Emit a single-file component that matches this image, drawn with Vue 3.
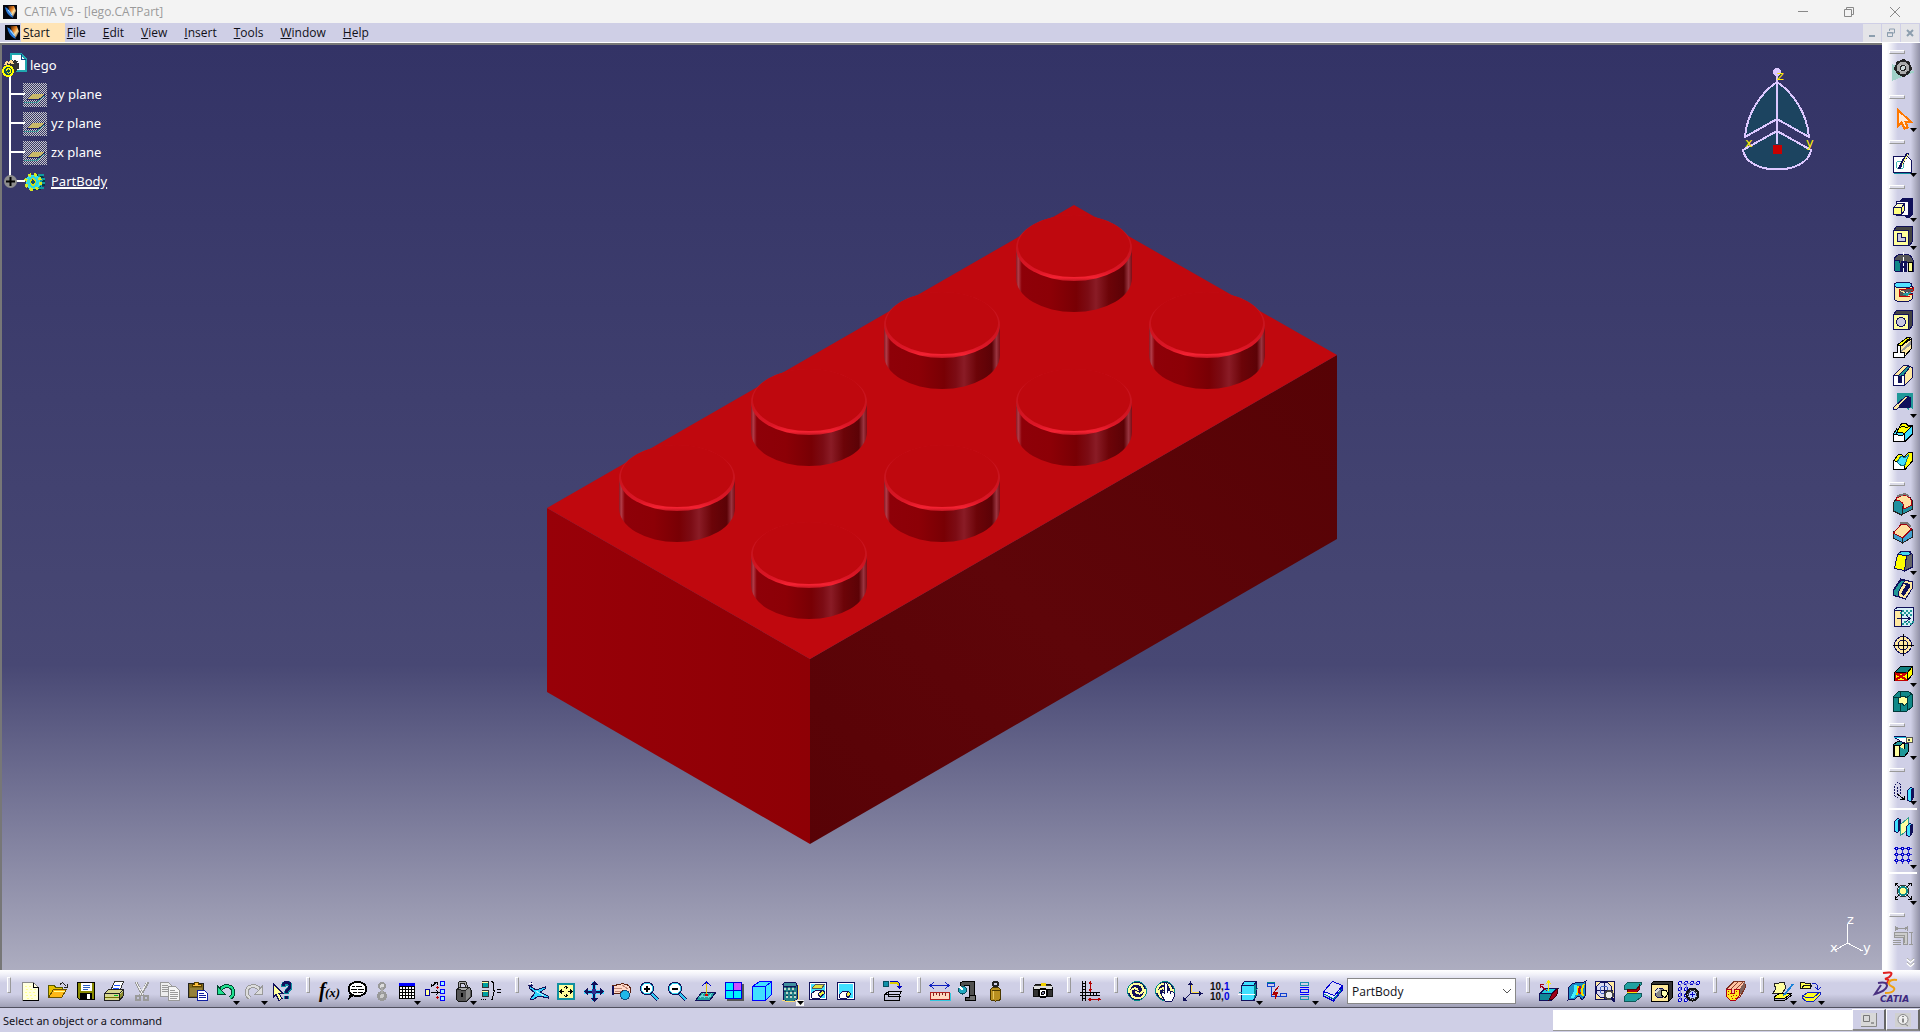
<script setup>
import { ref } from 'vue'

const p = (d, f = 'none', s = 'none', w = 1) => `<path d="${d}" fill="${f}" stroke="${s}" stroke-width="${w}"/>`
const r = (x, y, w, h, f = 'none', s = 'none') => `<rect x="${x}" y="${y}" width="${w}" height="${h}" fill="${f}" stroke="${s}"/>`
const c = (x, y, q, f = 'none', s = 'none', w = 1) => `<circle cx="${x}" cy="${y}" r="${q}" fill="${f}" stroke="${s}" stroke-width="${w}"/>`
const e = (x, y, a, b, f = 'none', s = 'none', w = 1) => `<ellipse cx="${x}" cy="${y}" rx="${a}" ry="${b}" fill="${f}" stroke="${s}" stroke-width="${w}"/>`
const t = (x, y, size, txt, f = '#000', extra = '') => `<text x="${x}" y="${y}" font-size="${size}" fill="${f}" ${extra}>${txt}</text>`

const N = '#10105a'
const Y = '#ffff9c'
const T = '#008888'
const C = '#40e0ff'
const G = '#8a8a8a'

const magnifier = (sign) =>
  p('M15 16l7 7', 'none', N, 4) + p('M15 16l7 7', 'none', '#30c8f0', 2) + c(11, 11.5, 6.5, '#fff', N, 1) + c(11, 11.5, 5.5, 'none', '#30d8f0', 1) + p(sign, 'none', '#000', 2)
const swirl =
  c(14, 14, 9.5, N, T, 1) +
  p('M6 16c-1-6 3-9 7-9c4 0 7 2 7 6c0 4-6 5-7 1', 'none', Y, 2) +
  p('M22 12c1 6-3 9-7 9c-4 0-7-2-7-6c0-4 6-5 7-1', 'none', Y, 2)
const plate = p('M4.5 8.5l3-4h16v15l-3 4z', '#444', N) + p('M4.5 8.5h15v15h-15z', Y, N)
const dots = (xs, ys) => xs.map((x) => ys.map((y) => c(x, y, 1.5, '#dfe0ff', '#0000c8')).join('')).join('')

const icons = {
  new: p('M6.5 5.5h11l5 5v13h-16z', '#ffffe0', G) + p('M9 9h2m2 0h2m-5 3h2m2 0h2m2 0h2m-11 3h2m2 0h2m2 0h2m-9 3h2m2 0h2m2 0h2m-9 3h2m2 0h2', 'none', '#ffff90') + p('M17.5 5.5v5h5v13h-16', 'none', '#000'),
  open: p('M4.5 20v-12h5l2 2h7v5', '#e8c000', '#5a5a00') + p('M4.5 20.5l5-8h13l-5 8z', '#ffb818', '#6a5200') + p('M10 14h11', 'none', '#ffff90') + p('M15.5 8.5c2-4 5-3 6 1M23.5 7v3h-4', 'none', '#222'),
  save: p('M5.5 5.5h17v17h-15l-2-2z', '#8a8a00', '#000') + r(9, 6, 11, 8, '#fff') + p('M11 8.5h7M11 10.5h7M11 12.5h5', 'none', '#2a60c0') + r(8, 16, 12, 7, '#000') + r(15, 17, 3, 5, '#fff'),
  print: p('M10.5 14l4-9.5h9l-4 10z', '#fff', '#333') + p('M14 8.5h6M13 11.5h6', 'none', '#1850ff') + p('M4.5 16.5l4-4h15v6l-4 5h-15z', '#d8d890', '#222') + p('M5 16.5h14.5v7M19.5 16.5l4-4', 'none', '#222') + p('M5 20.5h14', 'none', '#707000') + r(14, 18, 4, 1, '#00c020') + p('M20 18l3-4v4l-3 4z', '#8c8c30'),
  cut: p('M8 5l7 14M20 5l-8 14', 'none', '#999', 3) + p('M8 5l7 13M19 5l-7 13', 'none', '#eee') + c(10, 21, 2.5, 'none', '#999', 2) + c(18, 21, 2.5, 'none', '#999', 2),
  copy: p('M4.5 5.5h8l4 4v10h-12z', '#eee', '#999') + p('M6 8.5h6M6 10.5h7M6 12.5h7M6 14.5h7', 'none', '#999') + p('M12.5 9.5h7l4 4v10h-11z', '#f5f5f5', '#999') + p('M14 13.5h5M14 15.5h8M14 17.5h8M14 19.5h8M14 21.5h7', 'none', '#999'),
  paste: r(4.5, 6.5, 15, 14, '#806a20', '#222') + p('M8 7.5h2l1-2.5h3l1 2.5h2v2h-9z', '#ffc040', '#5a4000') + r(6, 11, 12, 8, '#94803a') + p('M13.5 13.5h7l3 3v7h-10z', '#fff', '#1020a0') + p('M15 16.5h5M15 18.5h7M15 20.5h7', 'none', '#1020a0'),
  undo: p('M8 13c4-6 14-5 13 3c0 2-1 4-3 5', 'none', '#004830', 4) + p('M8 13c4-6 14-5 13 3c0 2-1 4-3 5', 'none', '#20e090', 2) + p('M5.5 9v8.5h8z', '#20e090', '#004830'),
  redo: p('M20 13c-4-6-14-5-13 3c0 2 1 4 3 5', 'none', '#999', 4) + p('M20 13c-4-6-14-5-13 3c0 2 1 4 3 5', 'none', '#ddd', 2) + p('M22.5 9v8.5h-8z', '#ddd', '#999'),
  help: p('M15 10c0-5 8-5 7 0c0 3-4 3-4 7M18 19v3', 'none', '#1090a0', 5) + p('M15 9c0-5 8-5 7 0c0 3-4 3-4 7M18 19v3', 'none', N, 3) + p('M5 6.5v14l3-3l3 6l3-2l-3-5h4z', Y, N),

  fx: t(4, 20, 20, 'f', '#000', 'font-style="italic" font-weight="bold" font-family="Liberation Serif"') + t(10, 20, 13, '(x)', '#000', 'font-style="italic" font-weight="bold" font-family="Liberation Serif"'),
  comment: e(14.5, 12, 9, 7, '#fff', '#000', 2) + p('M7 16l-2 7l7-5z', '#000') + p('M9 9.5h3m1 0h6M8 12.5h6m1 0h6M10 15.5h4m1 0h5', 'none', '#000'),
  link: c(11, 9, 3, '#ddd', '#999', 2) + c(11, 19, 3.5, '#ccc', '#999', 3) + r(10, 10, 2, 6, '#aaa'),
  table: r(6, 6, 16, 3, '#0000ff') + r(6.5, 9.5, 15, 12, '#fff', '#000') + p('M6 12.5h16M6 15.5h16M6 18.5h16M9.5 9v13M12.5 9v13M15.5 9v13M18.5 9v13', 'none', '#000'),
  tree: r(4.5, 12.5, 4, 6, Y, '#0000a0') + p('M10 10l6-5M16 8v-3h-3M10 10v-3M10 15.5h7M15 13.5l3 2l-3 2', 'none', '#000') + p('M15 10.5h3M16.5 9v3M15 20.5h3M16.5 19v3', 'none', '#c00000') + r(19.5, 4.5, 4, 4, '#a0f0ff', '#0000ff') + r(19.5, 12.5, 4, 4, '#a0f0ff', '#0000ff') + r(19.5, 19.5, 4, 4, '#a0f0ff', '#0000ff'),
  lock: p('M10 13v-5c0-4 7-4 7 0v5', 'none', '#222', 3) + p('M10 13v-5c0-4 7-4 7 0v5', 'none', '#aaa', 1) + p('M7 13l4-3h9l2 3v7l-4 4h-9l-2-2z', '#555', '#111') + p('M7.5 12.5l3-2h9l-3 3z', '#aaa', '#222') + p('M17 13l4-2v9l-4 3z', '#888') + r(12, 16, 2, 4, '#000'),
  braces: r(5, 4, 6, 6, '#00a0a0', '#333') + r(5, 5, 6, 1, Y) + r(5, 13, 6, 6, '#00a0a0', '#333') + r(5, 14, 6, 1, Y) + p('M4 22.5h1m1 0h1m1 0h1', 'none', '#000') + p('M14 4.5c3 0 2 2 2 5c0 3 0 4 2 4.5c-2 .5-2 2-2 5c0 3 0 4-2 4', 'none', '#000') + p('M20 12.5h4M20 15.5h4', 'none', '#000'),

  fly: p('M6 9l6 4l9-3v2l-5 3l8 4v2l-9-2l-7 4l-2-1l5-6l-6-5z', '#30d8ff', N) + p('M4 9l5-1M7 5l1 5', 'none', N) + p('M5 6l4 1', 'none', '#fff', 1) + p('M12 14l8 5', 'none', '#b0f4ff'),
  fit: r(5, 6, 18, 17, Y) + r(6, 7, 16, 15, Y) + p('M6 6v17M5 7h18M22 6v17M5 22h18', 'none', '#1090a0', 2) + p('M14 9v3M14 17v3M8 14.5h4M16 14.5h4M12 11l2-2l2 2M12 18l2 2l2-2M10 12.5l-2 2l2 2M18 12.5l2 2l-2 2', 'none', '#000'),
  pan: p('M14 5v19M4 14.5h20', 'none', '#40d8ff', 4) + p('M14 6v17M5 14.5h18', 'none', N, 2) + p('M14 4l-4 4h8zM14 25l-4-4h8zM4 14.5l4-4v8zM24 14.5l-4-4v8z', N) + r(12, 12, 4, 5, '#303090'),
  rotate: p('M4 9c4 0 7-3 12-2c4 0 7 3 7 7l-2 4l-6-5l-4 4c-2 0-3-1-7-1z', '#ffd8c8', '#5a2010') + p('M5 11h9M7 14h8M14 8l6 4', 'none', '#c08878') + c(17, 18, 4.5, '#20b8e8', '#105080') + p('M4.5 9v9', 'none', N, 2),
  zoomIn: magnifier('M8 11.5h6M11 8.5v6'),
  zoomOut: magnifier('M8 11.5h6'),
  normal: p('M4 23l6-8h14l-6 8z', '#20a0a0', N) + p('M8 21l4-5M12 21l4-5M16 21l4-5M7 19h12', 'none', '#70d8d8') + p('M14.5 18v-12', 'none', '#e0c000') + p('M10 9l4.5-4l4.5 4', 'none', '#0000c0') + r(13, 17, 3, 2, '#d00000'),
  multi: r(7, 7, 17, 17, '#555') + r(5.5, 5.5, 16, 16, '#00f0ff', '#0000e0') + r(14, 6, 7, 7, '#d050ff') + p('M13.5 5v17M5 13.5h17', 'none', '#0000e0'),
  iso: p('M4.5 9.5l7-5h12v13l-6 6h-13z', C, '#0000ff') + p('M4.5 9.5h13v14M17.5 9.5l6-5', 'none', '#0000ff'),
  shade: p('M7 8v14c0 3 14 3 14 0v-14', '#208088', N) + p('M8 12h2m2 0h2m2 0h2m-8 4h2m2 0h2m2 0h2m-10 4h2m2 0h2m2 0h2', 'none', '#c0d8c8', 2) + p('M10 10h2m2 0h2m2 0h2m-12 4h2m2 0h2m2 0h2m-8 4h2m2 0h2m2 0h2', 'none', '#183858', 1) + e(14, 7.5, 7, 2.5, '#4090a0', N) + p('M6 23c3 2 12 2 16 0v-15', 'none', '#ffe070'),
  hide: r(5.5, 5.5, 17, 17, C, N) + r(6.5, 6.5, 15, 15, 'none', '#fff') + p('M8 11l4-4h9l-4 5z', '#e0e040', '#555') + p('M7 17l5-4h7l2 3l-5 5h-8z', '#fff', N) + p('M14 17l5-4l2 3l-5 4z', '#f0f040', N),
  swap: r(5.5, 5.5, 17, 17, C, N) + r(6.5, 6.5, 15, 15, 'none', '#fff') + p('M7 18l4-4h5l3 3l-4 4h-7z', '#fff', N) + p('M14 18l2-4l3 3l-3 4z', '#f0f040', N),

  update3d: c(7, 7, 3, '#1090a8', '#085060') + p('M11 5.5h6c2 0 3 2 3 5', 'none', '#e0d000', 2) + p('M11 4.5h6c2 0 4 2 4 5', 'none', '#0000c0') + p('M17 9h7l-3.5 3z', '#0000c0') + p('M5.5 17.5l4-3h13l-2 3v6h-15zM5.5 17.5h15M9.5 14.5v5h12', 'none', '#000'),

  measureBetween: p('M5 8.5h17M8 5l-4 3.5l4 3.5M19 5l4 3.5l-4 3.5', 'none', '#1020c0') + r(4.5, 15.5, 19, 7, '#ffd8c0', '#b02020') + p('M7.5 16v3M10.5 16v2M13.5 16v3M16.5 16v2M19.5 16v3', 'none', '#802020') + p('M4 23.5h20v-8', 'none', '#30c8e0'),
  measureItem: p('M6 6l4-2h10v19h-9v-3h4v-12h-5v3h-4z', '#505050', '#000') + c(8.5, 13, 4, '#20a8c0', '#085060') + p('M6 10l3 3', 'none', '#fff', 2) + p('M16 18h5v5h-5', '#707070', '#000'),
  inertia: c(13.5, 7, 2.5, 'none', '#222', 2) + p('M8.5 12.5c2-3 8-3 10 0v10c-2 2-8 2-10 0z', '#b89020', '#4a3800') + p('M11 13v9', 'none', '#e8c860') + p('M10 13h8', 'none', '#4a3800'),

  camera: p('M4.5 10.5l2-3h15l2 3v9h-19z', '#333', '#111') + r(5, 9, 18, 3, '#ddd') + r(12, 6, 5, 3, '#f0d000') + p('M4.5 12.5h19', 'none', '#000') + c(14, 16, 4.5, '#fff', '#000', 2) + c(14, 16, 1.5, '#8080a0', '#000'),

  rulers: p('M6.5 4v20M9.5 4v20M4 15.5h20M4 18.5h20', 'none', '#000') + p('M7 6.5h3M7 9.5h3M7 12.5h3M7 21.5h3M14.5 15v4M17.5 15v4M20.5 15v4', 'none', '#000') + p('M14.5 6v8M13 7l1.5-2l1.5 2M13 12l1.5 2l1.5-2M14 22.5h9M15 21l-2 1.5l2 1.5M22 21l2 1.5l-2 1.5', 'none', '#b00000'),

  update: swirl,
  manual: swirl + p('M13 7c0-2 3-2 3 0v6l6 2c2 1 2 3 1 5l-2 4h-7l-4-7c0-2 2-2 3-1z', '#fff', N) + p('M16.5 13v3M19.5 14v3', 'none', N),
  axis: p('M11.5 16v-11M11.5 16.5h12M11.5 16.5l-6 6', 'none', N) + p('M9 8l2.5-4l2.5 4zM20 14l4 2.5l-4 2.5zM4 20v4h4z', N) + p('M12.5 15v-7M13 15.5h7', 'none', '#ffe040'),
  mean: t(3, 13, 10, '10,', '#101010', 'font-weight="bold"') + t(17, 13, 10, '1', '#0000e0', 'font-weight="bold"') + t(3, 23, 10, '10,', '#101010', 'font-weight="bold"') + t(17, 23, 10, '0', '#0000e0', 'font-weight="bold"'),
  bodyOnly: p('M6.5 8.5l3-4h12v14l-3 5h-12z', C, N) + p('M7 8.5h12v15M18.5 8.5l3-4', 'none', N) + p('M19 9l2-3v12l-2 4z', T) + p('M3 17.5h17', 'none', '#fff') + p('M4 15.5h3M20 14l3-3', 'none', '#1890a0'),
  onlyCurrent: r(4.5, 6.5, 7, 3, 'none', '#1040d0') + p('M8.5 10v9h9', 'none', '#1040d0') + r(17.5, 16.5, 6, 3, 'none', '#1040d0') + p('M16 9l-5 6h4l-3 7l1-5h-3z', '#b00000', '#b00000') + p('M4 5.5h8', 'none', T),
  catalogTree: r(9.5, 5.5, 8, 3, 'none', '#1890b0') + r(9.5, 12.5, 8, 3, 'none', '#0000ff') + r(9.5, 19.5, 8, 3, 'none', '#1890b0') + p('M9 10.5h9M9 17.5h9', 'none', '#0000ff'),
  layers: p('M4.5 16.5l9-11l10 5l-9 12z', '#e8e8ff', '#0000d0') + p('M4.5 14.5l9-10l10 4l-8 10z', '#dcdcf4', '#0000d0') + p('M5 17l10 5l8-10', 'none', '#008888') + p('M4.5 15v4l10 5l9-11v-4', 'none', '#0000d0'),

  draft: p('M4.5 17l5-6h14l-6 7l-1 5h-12z', '#108898', N) + p('M5 16.5l5-5h12l-5 5z', '#20d0e0', N) + p('M14 23l3-6l6-6c1 5-3 12-9 12z', '#a00018', '#400008') + p('M13.5 14v-9M11 7l2.5-3l2.5 3', 'none', '#ffe800', 1) + p('M12 14l-7-6M5 11v-4h4', 'none', '#a00010'),
  curvature: p('M9 7c5-3 8 1 14-3c-1 6-1 10 0 14l-4 5c-2-4-4-5-7-1l-7 1c2-5 1-8 0-12z', '#1890c8', N) + p('M12 8c2 4 0 9-3 13', 'none', '#40f0ff', 3) + p('M15 9c1 3 0 6-1 9M21 7c-2 4-3 8-1 12', 'none', '#f0e000', 2) + p('M17 9c-1 3-1 6 0 8', 'none', '#d00000', 2),
  tap: r(4.5, 4.5, 19, 18, '#ffe8a0', N) + c(13, 13, 8, '#d8d8f0', N) + p('M13 4v18M4 13.5h18', 'none', N) + c(13, 13, 4, 'none', '#4060c0') + c(18, 18, 4, '#eee', '#444', 2) + p('M20 21l4 3', 'none', N, 3),
  wall: p('M5 9l4-4h13v3l-5 4h-12z', '#20a0a0', '#105858') + p('M8 12h10l2-3v4l-3 3h-9z', '#b00010', '#500') + r(8, 15, 10, 2, '#ffe000') + p('M5 20l4-4h13v4l-5 4h-12z', '#20a0a0', '#105858'),
  section: p('M4 7l3-3h18v17l-4 4z', '#333', '#000') + r(4.5, 7.5, 17, 17, '#ffe898', '#000') + c(13, 16, 5, '#888', N) + p('M15 13h4l2 4l-3 4l-4-3z', '#ffffb0', '#000') + p('M8 16l4-4', 'none', '#ddd', 2),
  gridGear: dots([5, 11, 17, 23], [6]) + dots([5, 11], [12, 18, 23]) + p('M6 6.5h17M5.5 7v16M11.5 7v16', 'none', '#8080e0') + c(17.5, 17.5, 6, '#c8c8d0', '#111', 2) + c(17.5, 17.5, 4, '#b8c8ff', '#303040') + p('M15 17.5h5M17.5 15v5', 'none', '#0000c0'),

  mold: p('M4.5 12l8-8h10l1 6l-6 11', '#ffc0a0', '#7a3020') + p('M9 12l8-8M14 12l8-8', 'none', '#8a4030') + p('M17.5 12l5-7v6l-5 8z', '#806058') + p('M4.5 12.5h5v4h3v-4h5v6l-4 5h-5l-4-4z', '#ffe820', '#b00010') + p('M6 14h1m1 2h1m-3 1h1m2 2h1m1-1h1m-2 3h1m3-3h1m-1-4h1m-2 7h1', 'none', '#d00000'),
  sketchOut: p('M5 7l10-2l2 6l-4 5h-9l3-4z', '#ffffa0', '#222') + p('M5 20l6-4h12l-7 5h-10z', '#ffff30', '#000') + p('M5 20v3h11l7-5', 'none', '#000') + p('M24 7l-8 10l-2 1', 'none', '#1880d8', 2),
  exchange: p('M3.5 11.5v-6h4l1 1h5v5z', '#ffff50', '#111') + p('M5 11l2-3h8l-2 3z', '#ffff50', '#111') + p('M15 6.5c4-1 6 1 6 6M18 10l3 3l3-3', 'none', '#1020c0') + p('M5 19v2l4 3h8l6-6v-3', '#ffff20', '#1020c0') + p('M5 19l7-4h11l-6 5h-9z', '#ffff20', '#1020c0'),

  gear: p('M3 5l23 8l-23 9z', '#a0d0c8') + c(14, 9, 7, 'none', '#222', 2) + c(14, 9, 5, '#d8d8d8', '#aaa', 3) + p('M14 0v3M14 15v3M5 9h3M20 9h3M8 3l2 2M18 13l2 2M8 15l2-2M18 5l2-2', 'none', '#222', 3) + c(14, 9, 2.5, '#ccd8d8', '#222', 1),
  pointer: p('M8.5 5.5v17l4-4l3 6l3-1l-2-6h5z', '#ffe8d8', '#ff7800', 2),
  sketch: p('M4.5 7.5h14l4 4v12h-18z', '#fff', N) + c(11, 16, 4, 'none', '#40b8b0', 1) + p('M19 4l-7 12l-2 4', 'none', N, 3) + p('M19 5l-6 11', 'none', '#ffff80', 1) + p('M5 24.5h18', 'none', '#1090a0'),

  pad: p('M10 7l4-3h10v16l-4 4h-3z', N) + r(7.5, 7.5, 12, 14, '#fff', N) + p('M4.5 13.5l4-4h7l-3 4z', '#ffffc0', N) + p('M4.5 13.5h8v7h-8zM12.5 13.5l3-4v7l-3 4z', '#ffff80', N),
  pocket: plate + p('M8.5 11.5h4v4h4v4h-8z', '#c8c8e0', N),
  shaft: p('M5 10c2-8 17-8 19 0v11h-5v-9h-4v9h-9z', '#555', N) + p('M5 10h5l1 3v8h-5z', '#108888', N) + p('M19 12h4v9h-4z', '#ffff90', '#000') + r(12, 11, 6, 11, N) + p('M14.5 2v3m0 2v4m0 2v3m0 2v4', 'none', '#fff'),
  groove: p('M5 8v13c3 4 15 4 18 0v-6h-7v-4h7v-3', '#ffe8a0', N) + e(14, 7, 9, 3, '#50e0ff', N) + p('M10 12l14-2v3l-5 3h5M10 12v6l11 1', '#555', '#c00000', 1) + p('M13 16l9-2l-4 4z', '#20a0a0'),
  hole: plate + c(12, 16, 4.5, '#c8c8e0', N, 1),
  rib: p('M11.5 18.5v-6l11-8v10l-7 8z', '#ffe8a0', '#000') + p('M12 16l10-9v4l-10 7', '#999') + p('M8 11l11-8h3l-10 9h-4z', '#ffff00', '#000') + p('M4.5 18.5h4v-7h3v7h4v5h-11z', '#fff', '#000'),
  slot: p('M4.5 13.5l10-10h4l5 2v10l-8 8h-11z', '#ffe8a0', N) + p('M9 14l10-10l2 1l-7 9v6h-4z', '#209898', N) + p('M4.5 13.5h5v7h3v-7h3v10h-11z', '#fff', N) + p('M10 14h2v6h-2z', N),
  stiffener: p('M8 3h16v16l-4-2v4l-5-6h-7z', '#209898') + p('M9 18l10-11h2v10z', N, N) + p('M4.5 17.5l12-11h3l-12 13h-3z', '#ffe8a0', N),
  multiSec: p('M4.5 16l3-5l4 1l8-5h4v9l-7 7h-12z', '#40e0ff', '#000') + p('M4.5 16.5c4-1 6 3 11 0v7h-11z', '#fff', '#000') + p('M7 16c3-5 3-9 7-11c5 0 5 3 6 4l3-1l-7 7c-2 2-5-4-9 1z', '#ffff00', '#000') + p('M11 10c3-4 6 2 10-2', 'none', '#000'),
  removeSec: p('M4.5 15l5-7h3l2 3l6-5h3v9l-7 8h-12z', '#ffff00', '#000') + p('M4.5 14.5c4 1 6 5 11 1v8h-11z', '#fff', '#000') + p('M8 16l4-6c4 3 6 0 8-2l-3 8c-1 6-6 4-9 0z', '#40e0ff', '#107080'),

  fillet: p('M4.5 12v8l8 4l11-6v-6c0-5-3-6-7-7l-9 2z', '#2090a0', '#222') + p('M7 7l8-3c6 1 8 4 8 10l-8 4c0-6-2-8-8-9z', '#ffe0a0', '#b00010') + p('M8 5l8-2l4 2', 'none', '#777', 2) + p('M13 15v9', 'none', '#222'),
  chamfer: p('M4.5 13v6l9 5l10-6v-7l-10 4z', '#40a0d0', '#222') + p('M4.5 14l8-9h4l6 5l-9 9z', '#ffe0a0', '#a00010') + p('M11 4h7l4 4', 'none', '#777', 2) + p('M13.5 19v5', 'none', '#222'),
  draftAngle: p('M17.5 9l4-4l2 3v12l-8 4z', '#666', N) + p('M9 7l4-3h7l2 3l-4 2h-9z', '#40d8f0', N) + p('M8.5 7.5l9 1l-2 15l-10-2z', '#ffff00', N),
  shell: p('M4.5 15l7-11l12 3v6l-7 11l-12-4z', '#ffe8a0', N) + p('M5 15l7-10h4l-6 11l-1 6l-5-2z', '#209898', N) + p('M13 7l8 2v3l-6 9l-3-2l5-9z', N),
  thickness: p('M5 7l4-3h15v16l-3 3h-16z', '#d8f0f8', N) + r(5, 7, 7, 16, '#ffe8a0', N) + p('M13 8h2m2 0h2m2 0h2m-12 2h2m2 0h2m2 0h2m-8 2h2m2 0h2m2 0h2m-8 7h2m2 0h2m2 0h2m-12 2h2m2 0h2m2 0h2', 'none', '#209898', 2) + p('M8 15.5h13M17 12l4 3.5l-4 3.5', 'none', N, 1),
  thread: c(14, 14, 8.5, '#ffe8a0', N) + c(14, 14, 5, 'none', N) + p('M14.5 3v22M4 14.5h21', 'none', '#000'),
  removeFace: p('M5.5 13.5l6-6h12v8l-5 6h-13z', '#ffff00', '#000') + p('M5.5 13.5l6-6h12l-5 6z', '#108080', '#000') + p('M6 14h12v7h-12z', '#ffff00', '#c00000') + p('M6 14l12 7M18 14l-12 7', 'none', '#d00000', 2) + p('M18.5 14v7', 'none', '#000'),
  replaceFace: p('M4.5 9.5l5-5h10l4 3v12l-6 5h-13z', '#108888', '#003838') + p('M5 10h13v14M18 10l5-3M11.5 4v20', 'none', '#003838') + p('M9 11l5-2l5 2l-1 5l-3 3l-2-3h-4z', '#ffffa0', '#003838'),

  split: p('M4.5 12.5l4-3h11v10l-4 5h-11z', '#209898', '#000') + p('M5 13h5v11h-5z', '#ffffa0', '#000') + p('M5 5l10-1l9 6l-8 2z', '#fff', N) + p('M5 5h10l9 5', 'none', '#20c0e0') + r(17.5, 5.5, 6, 5, '#ffffa0', '#555') + r(19, 7, 2, 2, '#444') + p('M10 14l5-3v6', '#ffffa0', '#000'),
  translate: `<g stroke-dasharray="2 1">${p('M5.5 8.5l3-3l3 2v10l-3 3l-3-2zM8.5 10v9', 'none', N)}</g>` + p('M8 17l7 5M11 22h4v-3', 'none', '#000') + p('M18.5 13.5l3-3l3 1v9l-3 4l-3-1z', '#40e0ff', N) + p('M22 12l2-1v9l-2 4z', N),
  mirror: p('M5.5 8.5l3-3l3 1v9l-3 4l-3-1z', '#40e0ff', N) + p('M9 7l2-1v9l-2 4z', N) + p('M11 12l8-7v12l-8 6z', '#ffffa0', '#30a090') + p('M17.5 13.5l3-3l3 1v8l-3 4l-3-1z', '#40e0ff', N) + p('M21 12l2-1v8l-2 4z', N),
  pattern: p('M7.5 6v17M13.5 6v17M19.5 6v17M5 7.5h18M5 13.5h18M5 19.5h18', 'none', '#3030d0') + dots([7.5, 13.5, 19.5], [7.5, 13.5, 19.5]),
  scale: c(14, 14, 6, '#fff', '#333') + c(14, 14, 4, '#ffff90', '#108888', 2) + p('M10 10l-4-4M18 10l4-4M10 18l-4 4M18 18l4 4M6 9v-3h3M22 9v-3h-3M6 19v3h3M22 19v3h-3', 'none', '#000'),
  constraint: p('M6.5 4v5M18.5 4v5M7 6.5h11M9 5l-2 1.5l2 1.5M16 5l2 1.5l-2 1.5M20 10.5h4M20 22.5h4M22.5 11v11', 'none', '#999') + p('M5 10.5h13v12h-4v-7h-9z', '#ccc', '#999') + p('M4 18.5h8M4 20.5h8M4 22.5h8M5 13h10v8', 'none', '#999'),
}

const b = (icon, label, menu = false) => ({ icon, label, menu })

const bottomGroups = [
  [b('new', 'New'), b('open', 'Open'), b('save', 'Save'), b('print', 'Quick Print'), b('cut', 'Cut'), b('copy', 'Copy'), b('paste', 'Paste'), b('undo', 'Undo', true), b('redo', 'Redo', true), b('help', "What's This?")],
  [b('fx', 'Formula'), b('comment', 'Comment and URLs'), { ...b('link', 'Check'), narrow: true }, b('table', 'Design Table', true), b('tree', 'Knowledge Inspector'), b('lock', 'Lock Parameters', true), b('braces', 'Equivalent Dimensions')],
  [b('fly', 'Fly Mode'), b('fit', 'Fit All In'), b('pan', 'Pan'), b('rotate', 'Rotate'), b('zoomIn', 'Zoom In'), b('zoomOut', 'Zoom Out'), b('normal', 'Normal View'), b('multi', 'Create Multi-View'), b('iso', 'Isometric View', true), { ...b('shade', 'Shading with Edges', true), lit: true }, b('hide', 'Hide/Show'), b('swap', 'Swap Visible Space')],
  [b('update3d', 'Exchange')],
  [b('measureBetween', 'Measure Between'), b('measureItem', 'Measure Item'), b('inertia', 'Measure Inertia')],
  [b('camera', 'Capture')],
  [b('rulers', 'Mean Dimensions')],
  [b('update', 'Update All'), b('manual', 'Manual Update'), b('axis', 'Axis System'), b('mean', 'Tolerances'), b('bodyOnly', 'Create Datum', true), b('onlyCurrent', 'Only Current Body'), b('catalogTree', 'Insert in Tree', true), b('layers', 'Current Body')],
  [b('draft', 'Draft Analysis'), b('curvature', 'Curvature Analysis'), b('tap', 'Tap and Thread Analysis'), b('wall', 'Wall Thickness'), b('section', 'Dynamic Sectioning'), b('gridGear', 'Work on Support')],
  [b('mold', 'Functional Features')],
  [b('sketchOut', 'Sketch Output', true), b('exchange', 'Catalog Exchange', true)],
]

const sideGroups = [
  [[b('gear', 'Part Design')]],
  [[b('pointer', 'Select', true)]],
  [[b('sketch', 'Sketch', true)]],
  [[b('pad', 'Pad', true), b('pocket', 'Pocket', true), b('shaft', 'Shaft'), b('groove', 'Groove'), b('hole', 'Hole'), b('rib', 'Rib'), b('slot', 'Slot'), b('stiffener', 'Stiffener', true), b('multiSec', 'Multi-sections Solid'), b('removeSec', 'Removed Multi-sections Solid')]],
  [[b('fillet', 'Edge Fillet', true), b('chamfer', 'Chamfer'), b('draftAngle', 'Draft Angle', true), b('shell', 'Shell'), b('thickness', 'Thickness'), b('thread', 'Thread/Tap'), b('removeFace', 'Remove Face', true), b('replaceFace', 'Replace Face')]],
  [[b('split', 'Split', true)]],
  [[b('translate', 'Translation', true)], [b('mirror', 'Mirror'), b('pattern', 'Rectangular Pattern', true)], [b('scale', 'Scaling', true)]],
  [[b('constraint', 'Constraints')]],
]

const menus = ['Start', 'File', 'Edit', 'View', 'Insert', 'Tools', 'Window', 'Help']
const planes = ['xy plane', 'yz plane', 'zx plane']
const studs = [[527, 45], [395, 122], [660, 122], [262, 199], [527, 199], [130, 275], [395, 275], [262, 352]]
const body = ref('PartBody')
const command = ref('')
</script>

<template>
  <div class="app">
    <header class="titlebar">
      <svg class="app-icon" width="14" height="14" viewBox="0 0 14 14"><use href="#comet" /></svg>
      <h1>CATIA V5 - [lego.CATPart]</h1>
      <div class="window-buttons">
        <button aria-label="Minimize"><svg width="12" height="12"><path d="M1 5.5h10" /></svg></button>
        <button aria-label="Restore"><svg width="12" height="12"><path d="M1.5 3.5h7v7h-7zM3.5 3v-1.5h7v7h-2" /></svg></button>
        <button aria-label="Close"><svg width="12" height="12"><path d="M1 1l10 10M11 1l-10 10" /></svg></button>
      </div>
    </header>

    <nav class="menubar">
      <svg class="doc-icon" width="15" height="15" viewBox="0 0 14 14">
        <defs>
          <linearGradient id="flame" x1="0" y1="0" x2="1" y2="1">
            <stop offset="0" stop-color="#301000" /><stop offset=".4" stop-color="#e88020" /><stop offset=".6" stop-color="#ffe0a0" /><stop offset="1" stop-color="#401808" />
          </linearGradient>
          <g id="comet">
            <rect width="14" height="14" fill="#05060e" />
            <path d="M5 1h6l2 5l-3 6l-3-4z" fill="url(#flame)" />
            <path d="M2 2c1 4 2 8 8 11c-1-4-2-7-6-10z" fill="#2878d8" />
            <path d="M5 5l4 5" stroke="#b0e0ff" fill="none" />
          </g>
        </defs>
        <use href="#comet" />
      </svg>
      <button v-for="(m, i) in menus" :key="m" class="menu" :class="{ active: i === 0 }"><u>{{ m[0] }}</u>{{ m.slice(1) }}</button>
      <div class="mdi">
        <button aria-label="Minimize document"><svg width="10" height="10"><path d="M2 8h6" /></svg></button>
        <button aria-label="Restore document"><svg width="10" height="10"><path d="M3.5 3v-2h5v4h-2M1.5 4.5h5v4h-5zM1 5h6" class="thin" /></svg></button>
        <button aria-label="Close document"><svg width="10" height="10"><path d="M2 2l6 6M8 2l-6 6" /></svg></button>
      </div>
    </nav>

    <div class="work">
      <main class="viewport">
        <svg class="brick" viewBox="0 0 790 641" role="img" aria-label="lego">
          <defs>
            <linearGradient id="wall">
              <stop offset="0" stop-color="#8a1822" /><stop offset=".02" stop-color="#b03c48" /><stop offset=".05" stop-color="#8e0008" />
              <stop offset=".3" stop-color="#8c0006" /><stop offset=".52" stop-color="#780004" /><stop offset=".62" stop-color="#7c0c14" /><stop offset=".69" stop-color="#8a1c26" />
              <stop offset=".8" stop-color="#6c0408" /><stop offset=".93" stop-color="#5c0206" /><stop offset=".97" stop-color="#98343f" /><stop offset="1" stop-color="#7c0c14" />
            </linearGradient>
            <linearGradient id="rim" x1="0" y1="0" x2="0" y2="1">
              <stop offset="0" stop-color="#c8141e" /><stop offset=".5" stop-color="#c8141e" /><stop offset=".85" stop-color="#dc1626" /><stop offset=".95" stop-color="#f42232" /><stop offset="1" stop-color="#c01420" />
            </linearGradient>
            <linearGradient id="dark" x1="0" y1="1" x2="1" y2="0">
              <stop offset="0" stop-color="#580206" /><stop offset=".45" stop-color="#5e0509" /><stop offset="1" stop-color="#560205" />
            </linearGradient>
            <linearGradient id="side"><stop offset="0" stop-color="#980008" /><stop offset="1" stop-color="#8e0005" /></linearGradient>
          </defs>
          <path d="M0 305L263 456V641L0 489z" fill="url(#side)" />
          <path d="M263 456L790 152V336L263 641z" fill="url(#dark)" />
          <path d="M527 2L790 152L263 456L0 305z" fill="#c0080e" />
          <g v-for="[x, y] in studs" :key="`${x}-${y}`" :transform="`translate(${x} ${y})`">
            <path d="M-58 0V30A58 34 0 0 0 58 30V0z" fill="url(#wall)" />
            <ellipse rx="58" ry="33" fill="url(#rim)" />
            <ellipse cy="-2" rx="56" ry="31" fill="#bf080e" />
          </g>
        </svg>

        <ul class="tree">
          <li class="root">
            <svg width="26" height="26" viewBox="0 0 26 26" shape-rendering="crispEdges">
              <path d="M9 1h10l5 5v12h-15z" fill="#fff" stroke="#20a8b0" stroke-width="2" />
              <path d="M19 1v5h5" fill="none" stroke="#104080" />
              <circle cx="11" cy="13" r="5" fill="#333" stroke="#333" stroke-width="3" stroke-dasharray="3 1" />
              <path d="M3 12l2-3l2 1l2-2l2 3" stroke="#ffd890" stroke-width="2" fill="none" />
              <circle cx="6" cy="18" r="5" fill="#105050" stroke="#ffff00" stroke-width="2" />
              <path d="M4 18c0-3 5-3 5 0c0 2-3 3-4 1" stroke="#ffff00" stroke-width="1" fill="none" />
            </svg>
            <span>lego</span>
          </li>
          <li v-for="name in planes" :key="name" class="node">
            <svg width="24" height="24" shape-rendering="crispEdges">
              <defs><pattern id="dither" width="2" height="2" patternUnits="userSpaceOnUse"><path d="M0 0h1v1h-1zM1 1h1v1h-1z" fill="#c8c8c8" /></pattern></defs>
              <rect width="24" height="24" fill="url(#dither)" />
              <path d="M4 16l6-5h12l-6 5z" fill="#c8b868" />
              <path d="M4 17h11" fill="none" stroke="#202060" stroke-width="2" stroke-dasharray="1 1" />
              <path d="M1 19.5h13l8-7" fill="none" stroke="#409898" />
              <path d="M4 16.5h12l6-5" fill="none" stroke="#202060" />
            </svg>
            <span>{{ name }}</span>
          </li>
          <li class="node last">
            <svg width="24" height="24" shape-rendering="crispEdges">
              <circle cx="14" cy="12" r="7" fill="#10a0a8" stroke="#003848" stroke-width="3" stroke-dasharray="4 2" />
              <path d="M15 5h6M17 9h5M17 13h5M15 18h6" stroke="#109aa0" stroke-width="2" />
              <circle cx="10" cy="12" r="7.5" fill="#30e8f0" stroke="#d8e820" stroke-width="3" stroke-dasharray="3 3" />
              <circle cx="10" cy="12" r="6" fill="#30d8e0" />
              <path d="M10 8l3 4l-3 4l-3-4z" fill="#105070" stroke="#e0e000" />
            </svg>
            <span class="current">PartBody</span>
            <button class="expand" aria-label="Expand PartBody"><svg width="13" height="13"><path d="M6.5 2v9M2 6.5h9" stroke="#000" stroke-width="2" /></svg></button>
          </li>
        </ul>

        <svg class="compass" width="76" height="106" viewBox="0 0 76 106" shape-rendering="crispEdges">
          <g fill="#1c4460" stroke="#dcc8ff" stroke-width="2">
            <path d="M38 16C23 26 8 46 6 71L38 53L70 71C68 46 53 26 38 16z" />
            <path d="M38 65L4 84C8 110 68 110 72 84z" />
            <path d="M38 8V78" />
          </g>
          <circle cx="38" cy="6" r="4" fill="#dcc8ff" />
          <rect x="34" y="79" width="9" height="9" fill="#c80000" />
          <g fill="#ffee00"><text x="38" y="14">z</text><text x="6" y="81">x</text><text x="67" y="81">y</text></g>
        </svg>

        <svg class="triad" width="44" height="44" viewBox="0 0 44 44" shape-rendering="crispEdges">
          <path d="M18.5 13v19M18.5 32l-12 7M18.5 32l15 8" fill="none" stroke="#fff" />
          <g fill="#fff"><text x="18" y="13">z</text><text x="1" y="41">x</text><text x="34" y="41">y</text></g>
        </svg>
      </main>

      <aside class="sidebar">
        <div v-for="(g, gi) in sideGroups" :key="gi" class="side-group">
          <span class="grip flat"></span>
          <div v-for="(section, si) in g" :key="si" class="section">
            <button v-for="item in section" :key="item.label" class="tool" :aria-label="item.label">
              <svg width="28" height="28" viewBox="0 0 28 28" shape-rendering="crispEdges" v-html="icons[item.icon]"></svg>
              <i v-if="item.menu" class="more"></i>
            </button>
          </div>
        </div>
        <button class="overflow" aria-label="More tools">
          <svg width="9" height="9"><path d="M1 1l3.5 3l3.5-3M1 5l3.5 3l3.5-3" fill="none" stroke="#fff" stroke-width="2" /><path d="M1 0l3.5 3l3.5-3M1 4l3.5 3l3.5-3" fill="none" stroke="#aaa" /></svg>
        </button>
      </aside>
    </div>

    <div class="toolbar">
      <div v-for="(g, gi) in bottomGroups" :key="gi" class="group">
        <span class="grip"></span>
        <button v-for="item in g" :key="item.label" class="tool" :class="{ narrow: item.narrow, lit: item.lit }" :aria-label="item.label">
          <svg :width="item.narrow ? 22 : 28" height="28" shape-rendering="crispEdges" v-html="icons[item.icon]"></svg>
          <i v-if="item.menu" class="more"></i>
        </button>
        <label v-if="gi === 7" class="combo">
          <select v-model="body" aria-label="Current body"><option>PartBody</option></select>
          <svg width="10" height="6"><path d="M1 1l4 4l4-4" fill="none" stroke="#555" /></svg>
        </label>
      </div>
      <svg class="brand" width="42" height="32" viewBox="0 0 42 32">
        <path d="M11 2c6-1 10-1 8 2c-1 2-3 3-6 4c5 0 4 2 1 5" fill="none" stroke="#e02020" stroke-width="2" />
        <path d="M6 12c10-2 11 3 6 7c-2 2-6 3-9 4l6-9" fill="none" stroke="#4a3080" stroke-width="2" />
        <path d="M25 9c-5-1-9 1-8 4c1 3 7 3 5 6c-1 3-6 3-9 3" fill="none" stroke="#f0a010" stroke-width="2" />
        <text x="8" y="31">CATIA</text>
      </svg>
    </div>

    <footer class="status">
      <span class="prompt">Select an object or a command</span>
      <input v-model="command" type="text" aria-label="Power input" />
      <button aria-label="Dialog"><svg width="16" height="14"><path d="M0 0h16v14h-16z" fill="#d8d8d8" /><path d="M2.5 2.5h6v6h-6z" stroke="#777" fill="none" /><path d="M10 9h3v2h-3z" fill="#999" /><path d="M0 13.5h15.5v-14" stroke="#888" fill="none" /></svg></button>
      <button aria-label="Information"><svg width="16" height="14"><path d="M0 0h16v14h-16z" fill="#d0d0d0" /><circle cx="8" cy="6.5" r="5" stroke="#888" fill="#eee" /><path d="M8 5.5v4M8 3v1" stroke="#888" stroke-width="2" /><path d="M10 11l3 2" stroke="#888" /></svg></button>
    </footer>
  </div>
</template>

<style>
body { margin: 0; overflow: hidden; }
</style>

<style scoped>
.app { display: flex; flex-direction: column; height: 100vh; font: 12px/16px "Open Sans", "Noto Sans", sans-serif; color: #101018; background: #cfcfe6; }
button { padding: 0; border: 0; background: none; font: inherit; color: inherit; display: grid; place-items: center; }
svg { display: block; }

.titlebar { display: flex; align-items: center; height: 23px; flex: none; background: #f3f3f3; padding: 0 2px 0 3px; }
.titlebar h1 { flex: 1; margin: 0 0 0 7px; font-size: 12px; font-weight: 400; color: #9a9a9a; }
.window-buttons { display: flex; }
.window-buttons button { width: 46px; height: 23px; }
.window-buttons path { fill: none; stroke: #888; }

.menubar { display: flex; align-items: center; height: 19px; flex: none; background: #cfcfe6; border-bottom: 1px solid #fff; }
.doc-icon { margin-left: 5px; margin-right: 1px; }
.menu { display: block; height: 19px; padding: 0 15px 0 2px; }
.menu.active { background: #ffe4b5; }
.mdi { display: flex; gap: 1px; margin-left: auto; padding-right: 1px; }
.mdi button { width: 18px; height: 18px; background: #e4e4e8; }
.mdi path { fill: none; stroke: #8c9eae; stroke-width: 2; }
.mdi .thin { stroke-width: 1; }

.work { display: flex; flex: 1; min-height: 0; }
.viewport { position: relative; flex: 1; display: grid; place-items: center; padding-top: 32px; border: solid #777; border-width: 2px 0 0 2px; background: linear-gradient(#333366 0, #484874 67%, #adadc0 100%); }
.brick { width: 790px; max-width: 90%; }

.tree { position: absolute; top: 6px; left: 0; margin: 0; padding: 0; list-style: none; color: #fff; font: 13px/29px "Noto Sans", "Open Sans", sans-serif; }
.tree li { position: relative; display: flex; align-items: center; height: 29px; }
.tree .root { gap: 2px; z-index: 1; }
.tree .node { padding-left: 21px; gap: 4px; }
.node::before { content: ""; position: absolute; left: 7px; top: -9px; width: 14px; height: 22px; border: solid #fff; border-width: 0 0 2px 2px; }
.node + .node::before { top: -15px; height: 28px; }
.current { text-decoration: underline; text-decoration-thickness: 2px; }
.expand { position: absolute; left: 2px; top: 8px; width: 13px; height: 13px; border-radius: 50%; background: #8c8c8c; }
.compass { position: absolute; top: 21px; right: 67px; font: 13px "DejaVu Sans", sans-serif; }
.triad { position: absolute; right: 9px; bottom: 15px; font: 13px "DejaVu Sans", sans-serif; }

.sidebar { width: 38px; flex: none; box-sizing: border-box; padding: 7px 3px 0 6px; border-left: 1px solid #fff; background: linear-gradient(90deg, #fff 0, #fff 10%, #cfcfe6 40%, #cfcfe6 75%, #a4a4b8 92%, #9090a8 100%); }
.side-group { margin-bottom: 8px; }
.section + .section { margin-top: 3px; border-top: 2px solid #fff; padding-top: 3px; }
.grip { width: 2px; height: 14px; border: 1px solid; border-color: #fff #999 #999 #fff; background: #dcdce8; }
.grip.flat { display: block; width: 14px; height: 2px; margin-bottom: 5px; }
.tool { position: relative; width: 28px; height: 28px; }
.tool.narrow { width: 22px; }
.more { position: absolute; right: 0; bottom: 0; width: 7px; height: 4px; background: #000; clip-path: polygon(0 0, 100% 0, 50% 100%); }
.tool.lit::after { content: ""; position: absolute; right: 0; bottom: -1px; width: 8px; height: 6px; background: #f4f4f4; }
.tool.lit .more { z-index: 1; }
.overflow { margin-left: 17px; }

.toolbar { display: flex; align-items: center; box-sizing: border-box; height: 38px; flex: none; padding: 5px 0 0 7px; border-bottom: 1px solid #505060; font-family: "Liberation Sans", sans-serif; background: linear-gradient(#fff 0, #f4f4fa 10%, #cfcfe6 35%, #cfcfe6 65%, #a0a0b6 100%); }
.group { display: flex; align-items: center; margin-right: 10px; }
.toolbar .grip { align-self: flex-start; margin-right: 5px; }
.combo { position: relative; width: 169px; }
.combo select { display: block; width: 100%; height: 26px; box-sizing: border-box; padding: 0 4px; appearance: none; border: 1px solid #888; border-radius: 0; background: #fff; font: 12px "Open Sans", "Noto Sans", sans-serif; color: #101018; }
.combo svg { position: absolute; right: 4px; top: 10px; }
.brand { align-self: flex-start; margin: -4px 6px 0 auto; }
.brand text { font: italic bold 9px "DejaVu Sans", sans-serif; fill: #3c2880; }

.status { display: flex; align-items: center; height: 24px; flex: none; background: #cfcfe6; }
.prompt { flex: 1; padding: 2px 0 0 3px; font: 11px/16px "Noto Sans", sans-serif; }
.status input { width: 299px; height: 21px; box-sizing: border-box; border: 0; border-bottom: 1px solid #999; background: #fff; }
.status button { width: 34px; height: 22px; box-sizing: border-box; border: solid; border-width: 1px 2px 2px 1px; border-color: #fff #666 #888 #fff; }
</style>
